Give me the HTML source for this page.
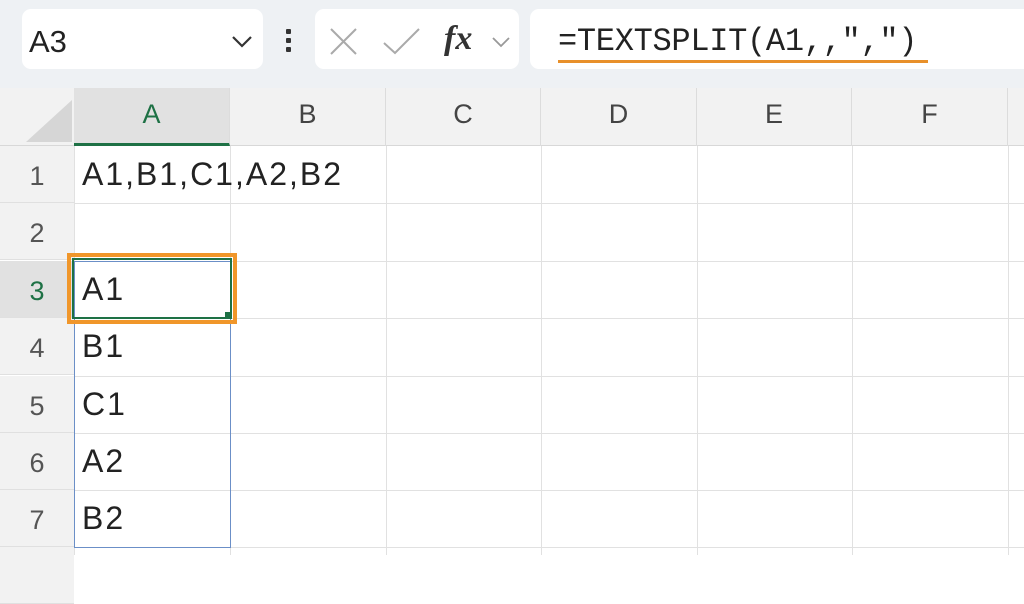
<!DOCTYPE html>
<html><head><style>
*{margin:0;padding:0;box-sizing:border-box}
body{width:1024px;height:555px;overflow:hidden;background:#fff;font-family:"Liberation Sans",sans-serif;position:relative}
.a{position:absolute}
.top{left:0;top:0;width:1024px;height:88px;background:#eef1f4}
.box{background:#fff;border-radius:9px;top:9px;height:60px}
.hdr{top:88px;height:58px;background:#f2f2f2;border-bottom:1px solid #d8d8d8}
.ch{top:88px;height:58px;line-height:52px;text-align:center;font-size:27px;color:#444;border-right:1px solid #dcdcdc}
.rh{left:0;width:74px;height:57px;text-align:center;font-size:27px;color:#555;background:#f2f2f2;border-bottom:1px solid #e0e0e0;padding-top:15px}
.hl{left:74px;width:950px;height:1px;background:#e1e1e1}
.vl{top:146px;width:1px;height:409px;background:#e1e1e1}
.t{left:82px;font-size:32px;color:#222;letter-spacing:2px}
</style></head><body>
<div class="a top"></div>
<div class="a box" style="left:22px;width:241px"></div>
<div class="a" style="left:29px;top:24px;font-size:31px;color:#222">A3</div>
<svg class="a" style="left:230px;top:34px" width="24" height="16"><path d="M3 3 L12 12 L21 3" stroke="#333" stroke-width="2.2" fill="none"/></svg>
<div class="a" style="left:286px;top:29px;width:5px;height:5px;background:#333;border-radius:1px"></div>
<div class="a" style="left:286px;top:38px;width:5px;height:5px;background:#333;border-radius:1px"></div>
<div class="a" style="left:286px;top:47px;width:5px;height:5px;background:#333;border-radius:1px"></div>
<div class="a box" style="left:315px;width:204px"></div>
<svg class="a" style="left:328px;top:26px" width="32" height="32"><path d="M3 3 L28 28 M28 3 L3 28" stroke="#aaa" stroke-width="2" fill="none"/></svg>
<svg class="a" style="left:382px;top:26px" width="40" height="32"><path d="M2 17 L13 27 L37 3" stroke="#aaa" stroke-width="2" fill="none"/></svg>
<div class="a" style="left:444px;top:20px;font-family:'Liberation Serif',serif;font-style:italic;font-weight:bold;font-size:34px;color:#333">fx</div>
<svg class="a" style="left:490px;top:35px" width="24" height="14"><path d="M3 3 L11 11 L19 3" stroke="#999" stroke-width="1.8" fill="none"/></svg>
<div class="a box" style="left:530px;width:520px"></div>
<div class="a" style="left:558px;top:23px;font-family:'Liberation Mono',monospace;font-size:32px;color:#222;letter-spacing:-0.3px">=TEXTSPLIT(A1,,",")</div>
<div class="a" style="left:558px;top:60px;width:370px;height:3px;background:#e8902a"></div>

<div class="a hdr" style="left:0;width:1024px"></div>
<svg class="a" style="left:20px;top:98px" width="54" height="46"><polygon points="52,2 52,44 6,44" fill="#d6d6d6"/></svg>
<div class="a ch" style="left:74px;width:156px;background:#e1e1e1;color:#1e7145;border-bottom:3px solid #1e7145">A</div>
<div class="a ch" style="left:230px;width:156px">B</div>
<div class="a ch" style="left:386px;width:155px">C</div>
<div class="a ch" style="left:541px;width:156px">D</div>
<div class="a ch" style="left:697px;width:155px">E</div>
<div class="a ch" style="left:852px;width:156px">F</div>

<div class="a rh" style="top:146px">1</div>
<div class="a rh" style="top:203px">2</div>
<div class="a rh" style="top:261px;background:#e1e1e1;color:#1e7145">3</div>
<div class="a rh" style="top:318px">4</div>
<div class="a rh" style="top:376px">5</div>
<div class="a rh" style="top:433px">6</div>
<div class="a rh" style="top:490px">7</div>
<div class="a rh" style="top:547px"></div>

<div class="a hl" style="top:203px"></div>
<div class="a hl" style="top:261px"></div>
<div class="a hl" style="top:318px"></div>
<div class="a hl" style="top:376px"></div>
<div class="a hl" style="top:433px"></div>
<div class="a hl" style="top:490px"></div>
<div class="a hl" style="top:547px"></div>
<div class="a vl" style="left:74px"></div>
<div class="a vl" style="left:230px"></div>
<div class="a vl" style="left:386px"></div>
<div class="a vl" style="left:541px"></div>
<div class="a vl" style="left:697px"></div>
<div class="a vl" style="left:852px"></div>
<div class="a vl" style="left:1008px"></div>

<div class="a" style="left:74px;top:261px;width:157px;height:287px;border:1px solid #6b8fc7"></div>
<div class="a t" style="top:156px">A1,B1,C1,A2,B2</div>
<div class="a t" style="top:271px">A1</div>
<div class="a t" style="top:328px">B1</div>
<div class="a t" style="top:386px">C1</div>
<div class="a t" style="top:443px">A2</div>
<div class="a t" style="top:500px">B2</div>

<div class="a" style="left:67px;top:253px;width:170px;height:71px;border:4px solid #f0962a"></div>
<div class="a" style="left:72px;top:258px;width:160px;height:61px;border:2px solid #1e7145"></div>
<div class="a" style="left:225px;top:312px;width:7px;height:7px;background:#1e7145"></div>
</body></html>
